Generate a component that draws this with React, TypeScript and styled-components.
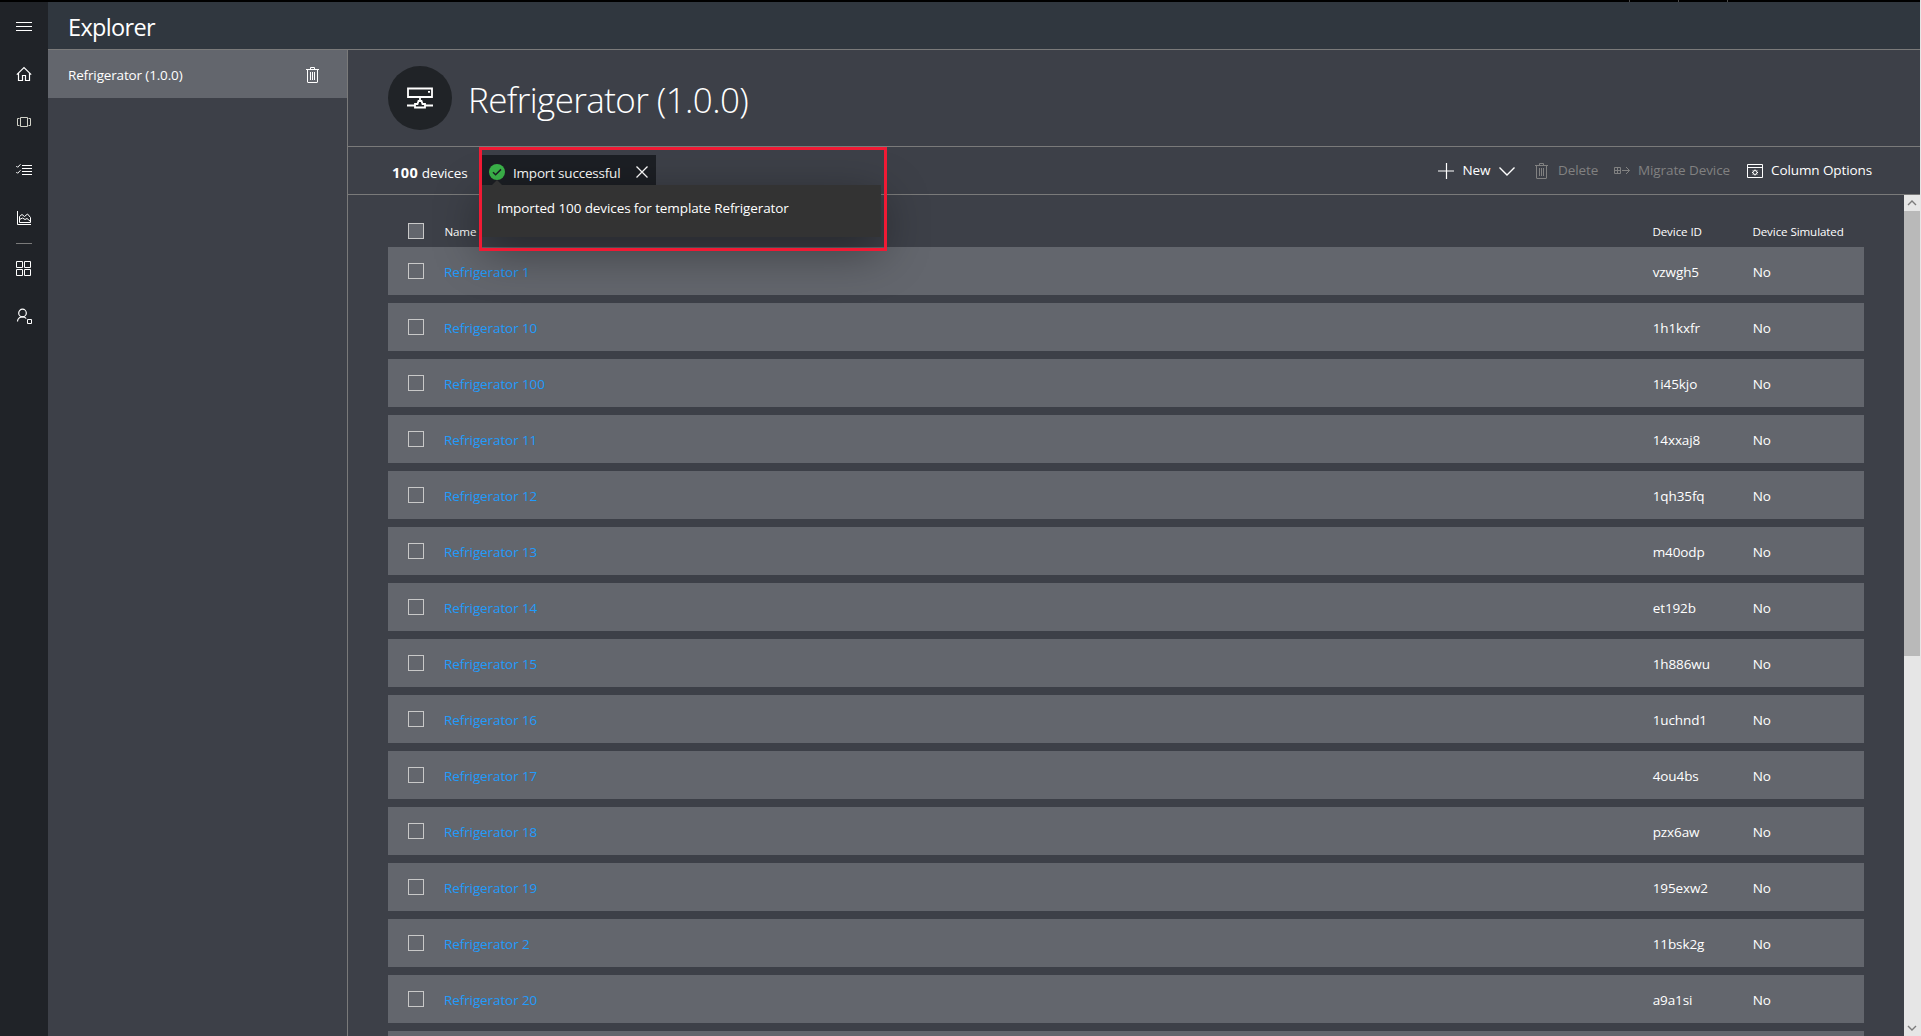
import React from "react";
import styled, { createGlobalStyle, css } from "styled-components";

const Global = createGlobalStyle`
  * { box-sizing: border-box; }
  html, body, #root { height: 100%; }
  body {
    margin: 0;
    overflow: hidden;
    background: #3d4048;
    color: #fff;
    font-family: "Open Sans", "Noto Sans", sans-serif;
    font-size: 13.5px;
    letter-spacing: -0.1px;
  }
`;

const Screen = styled.div`
  height: 100vh;
  display: flex;
  flex-direction: column;
  border-right: 1px solid #e6e6e6;
`;

const TopEdge = styled.div`
  height: 2px;
  flex: none;
  background: #000;
  display: flex;
  gap: 48px;
  padding-left: 1629px;
`;

const Tick = styled.i`
  width: 1px;
  background: #4c4c4c;
`;

const Shell = styled.div`
  flex: 1;
  min-height: 0;
  display: flex;
`;

const Rail = styled.nav`
  width: 48px;
  flex: none;
  background: #202328;
  display: flex;
  flex-direction: column;
  align-items: center;
`;

const RailItem = styled.a`
  width: 48px;
  height: 48px;
  display: flex;
  align-items: center;
  justify-content: center;
`;

const RailDivider = styled.div`
  width: 16px;
  height: 1px;
  margin: 1px 0 0;
  background: #7a7a7a;
`;

const Workspace = styled.div`
  flex: 1;
  min-width: 0;
  display: flex;
  flex-direction: column;
`;

const AppHeader = styled.header`
  height: 48px;
  flex: none;
  padding: 0 0 0 20px;
  background: #30373f;
  border-bottom: 1px solid #7a7a7a;
  font-size: 23.5px;
  line-height: 51px;
  letter-spacing: -0.65px;
`;

const Panes = styled.div`
  flex: 1;
  min-height: 0;
  display: flex;
`;

const TemplatePane = styled.aside`
  width: 300px;
  flex: none;
  border-right: 1px solid #7a7a7a;
`;

const TemplateItem = styled.div`
  height: 48px;
  padding: 2px 28px 0 20px;
  background: #63666d;
  display: flex;
  align-items: center;
  justify-content: space-between;
  letter-spacing: -0.15px;
`;

const Detail = styled.main`
  flex: 1;
  min-width: 0;
  display: flex;
  flex-direction: column;
`;

const DetailHeader = styled.div`
  height: 97px;
  flex: none;
  padding: 0 40px;
  display: flex;
  align-items: center;
  gap: 16px;
  border-bottom: 1px solid #7a7a7a;
`;

const Avatar = styled.div`
  width: 64px;
  height: 64px;
  border-radius: 50%;
  background: #202327;
  display: flex;
  align-items: center;
  justify-content: center;
`;

const Title = styled.h1`
  margin: 0;
  padding-top: 2px;
  font-size: 35px;
  font-weight: 300;
  letter-spacing: -0.6px;
  white-space: nowrap;
`;

const Toolbar = styled.div`
  height: 48px;
  flex: none;
  padding: 0 40px 0 44px;
  display: flex;
  align-items: flex-start;
  border-bottom: 1px solid #7a7a7a;
`;

const Count = styled.div`
  width: 90px;
  padding-top: 16px;
  line-height: 20px;
  white-space: nowrap;

  b {
    font-size: 14.5px;
    letter-spacing: 0.5px;
  }
`;

const Notice = styled.div`
  position: relative;
  width: 174px;
  height: 30px;
  margin-top: 8px;
  padding: 4px 8px 0 7px;
  display: flex;
  align-items: center;
  background: #1c1f24;
`;

const NoticeLabel = styled.span`
  flex: 1;
  margin-left: 8px;
  padding-top: 1px;
  letter-spacing: -0.2px;
  white-space: nowrap;
`;

const Callout = styled.div`
  position: absolute;
  z-index: 2;
  left: 0;
  top: 30px;
  width: 399px;
  height: 52px;
  padding: 14px 15px;
  background: #333;
  box-shadow: 0 14px 48px rgba(0, 0, 0, 0.42);
  white-space: nowrap;

  &::before {
    content: "";
    position: absolute;
    left: 10px;
    top: -5px;
    border: 5px solid transparent;
    border-top: 0;
    border-bottom-color: #333;
  }
`;

const Highlight = styled.div`
  position: absolute;
  z-index: 3;
  left: -3px;
  top: -8px;
  width: 408px;
  height: 104px;
  border: 3px solid #f01a34;
`;

const Commands = styled.div`
  margin-left: auto;
  padding-top: 14px;
  display: flex;
`;

const Command = styled.button<{ $width: number; $gap?: number; $muted?: boolean }>`
  width: ${(p) => p.$width}px;
  padding: 0;
  border: 0;
  background: none;
  font: inherit;
  line-height: 18px;
  letter-spacing: inherit;
  color: ${(p) => (p.$muted ? "#818181" : "#fff")};
  display: flex;
  align-items: flex-start;
  gap: ${(p) => p.$gap ?? 8}px;
  white-space: nowrap;

  svg {
    margin-top: 2px;
  }
`;

const TableArea = styled.div`
  flex: 1;
  min-height: 0;
  display: flex;
`;

const Table = styled.div`
  flex: 1;
  min-width: 0;
  padding: 0 40px;
  overflow: hidden;
`;

const columns = css`
  display: grid;
  grid-template-columns: 56px 1fr 100px 112px;
  align-items: center;
`;

const HeadRow = styled.div`
  ${columns}
  height: 52px;
  padding-top: 20px;
  font-size: 11.6px;
`;

const Row = styled.div`
  ${columns}
  height: 48px;
  margin-bottom: 8px;
  background: #63666d;
`;

const Check = styled.span<{ $filled?: boolean }>`
  width: 16px;
  height: 16px;
  margin-left: 20px;
  border: 1px solid #c8c8c8;
  background: ${(p) => (p.$filled ? "#63666d" : "transparent")};
`;

const HeadCell = styled.span`
  padding: 1px 0 0 0.4px;
`;

const Cell = styled.span`
  padding: 2px 0 0 0.7px;
`;

const NameLink = styled.a`
  padding-top: 2px;
  color: #219bfb;
`;

const Scrollbar = styled.div`
  width: 16px;
  flex: none;
  background: #e6e6e6;
  display: flex;
  flex-direction: column;
`;

const ScrollButton = styled.div`
  height: 16px;
  display: flex;
  align-items: center;
  justify-content: center;
`;

const Thumb = styled.div`
  height: 445px;
  margin-bottom: auto;
  background: #b9b9b9;
`;

const Glyph = styled.svg`
  flex: none;
  fill: none;
  stroke: currentColor;
`;

const Svg = ({ w = 16, h = 16, sw = 1, children }: { w?: number; h?: number; sw?: number; children: React.ReactNode }) => (
  <Glyph width={w} height={h} viewBox={`0 0 ${w} ${h}`} strokeWidth={sw}>
    {children}
  </Glyph>
);

const MenuIcon = () => <Svg><path d="M0 4.5h16M0 8.5h16M0 12.5h16" /></Svg>;
const HomeIcon = () => <Svg><path d="M.8 8.6 8 1.6l7.2 7M2.5 7.2v7.3h4v-5h3v5h4V7.2" strokeWidth="1.2" /></Svg>;
const DevicesIcon = () => <Svg><g stroke="#d2d2c8"><path d="M4.5 3.5h7v9h-7z" /><path d="M3.5 4.500h-2v7h2M12.500 4.500h2v7h-2" /></g></Svg>;
const JobsIcon = () => <Svg><path d="M6 3.5h10.500M6 6.500h10.500M6 9.500h10.500M6 12.500h10.500M.3 4l1.300 1.300L4.500 2.300M.3 10l1.300 1.300L4.500 8.300" /></Svg>;
const AnalyticsIcon = () => <Svg><path d="M1.500 1v13.500H15" /><path d="M3.500 12.500V6.500l2.500-2 2.500 2 3-2.500 3 3.500v5zM3.500 9.500l3-1.500 2.500 1.500 2-1 3.500 3" /></Svg>;
const AppsIcon = () => <Svg><path d="M.5 1.500h6v6h-6zM8.500 1.500h6v6h-6zM.5 9.500h6v6h-6zM8.500 9.500h6v6h-6z" /></Svg>;
const PersonIcon = () => <Svg><g strokeWidth="1.2"><circle cx="6.500" cy="5" r="3.800" /><path d="M1.500 13.500c0-2.800 2.200-4.700 5-4.700 1.600 0 2.900.6 3.700 1.700" /></g><path d="M11.500 11.500h4v4h-4z" /></Svg>;
const TrashIcon = () => <Svg w={13}><path d="M0 2.500h13M1.500 2.500v12.500a.5.500 0 0 0 .5.500h9a.5.500 0 0 0 .5-.5V2.500M4.500 2.500V.500h4v2M4.500 5v8M6.500 5v8M8.500 5v8" /></Svg>;
const ServerIcon = () => <Svg w={26} h={24} sw={1.8}><path d="M1 2.500h24v8.500H1zM13 11v3.500M0 19.500h8M18 19.500h8M8 18h2.500l1-3h3l1 3H18v3.500H8z" /><path d="M21 5.800h2" /></Svg>;
const PlusIcon = () => <Svg><path d="M8.500 0v16M0 8h16" strokeWidth="1.2" /></Svg>;
const ChevronIcon = () => <Svg sw={1.4}><path d="m.5 4.500 7.500 7.500 7.500-7.500" /></Svg>;
const MigrateIcon = () => <Svg><path d="M.5 4.500h6v6h-6zM3.500 4.500v6M.5 7.500h6M8 7.500h7.500M12 4l3.500 3.500L12 11" /></Svg>;
const OptionsIcon = () => <Svg><path d="M.5 1.500h15v13H.5zM.5 4.500h15" /><circle cx="8" cy="9.500" r="2" /><path d="M8 6.500v1M8 11.500v1M5 9.500h1M10 9.500h1M5.900 7.400l.7.700M9.400 10.900l.7.700M10.100 7.400l-.7.700M6.600 10.900l-.7.700" /></Svg>;
const SuccessIcon = () => <Svg><circle cx="8" cy="8" r="8" fill="#3bb44a" stroke="none" /><path d="m4 8.300 2.600 2.500L12 5.400" stroke="#1c1f24" strokeWidth="1.5" /></Svg>;
const CloseIcon = () => <Svg w={12} h={12} sw={1.3}><path d="m.5.500 11 11M11.500.500l-11 11" /></Svg>;
const Arrow = ({ d }: { d: string }) => <Svg sw={1.4}><path stroke="#7c7c7c" d={d} /></Svg>;

const devices = [
  ["1", "vzwgh5"], ["10", "1h1kxfr"], ["100", "1i45kjo"], ["11", "14xxaj8"], ["12", "1qh35fq"],
  ["13", "m40odp"], ["14", "et192b"], ["15", "1h886wu"], ["16", "1uchnd1"], ["17", "4ou4bs"],
  ["18", "pzx6aw"], ["19", "195exw2"], ["2", "11bsk2g"], ["20", "a9a1si"],
];

export default function App() {
  return (
    <>
      <Global />
      <Screen>
        <TopEdge><Tick /><Tick /><Tick /></TopEdge>
        <Shell>
          <Rail>
            <RailItem><MenuIcon /></RailItem>
            <RailItem><HomeIcon /></RailItem>
            <RailItem><DevicesIcon /></RailItem>
            <RailItem><JobsIcon /></RailItem>
            <RailItem><AnalyticsIcon /></RailItem>
            <RailDivider />
            <RailItem><AppsIcon /></RailItem>
            <RailItem><PersonIcon /></RailItem>
          </Rail>
          <Workspace>
            <AppHeader>Explorer</AppHeader>
            <Panes>
              <TemplatePane>
                <TemplateItem>Refrigerator (1.0.0)<TrashIcon /></TemplateItem>
              </TemplatePane>
              <Detail>
                <DetailHeader>
                  <Avatar><ServerIcon /></Avatar>
                  <Title>Refrigerator (1.0.0)</Title>
                </DetailHeader>
                <Toolbar>
                  <Count><b>100</b> devices</Count>
                  <Notice>
                    <SuccessIcon />
                    <NoticeLabel>Import successful</NoticeLabel>
                    <CloseIcon />
                    <Callout>Imported 100 devices for template Refrigerator</Callout>
                    <Highlight />
                  </Notice>
                  <Commands>
                    <Command $width={97} $gap={8.5}><PlusIcon />New<ChevronIcon /></Command>
                    <Command $width={79} $gap={10} $muted><TrashIcon />Delete</Command>
                    <Command $width={133} $muted><MigrateIcon />Migrate Device</Command>
                    <Command $width={133}><OptionsIcon />Column Options</Command>
                  </Commands>
                </Toolbar>
                <TableArea>
                  <Table>
                    <HeadRow>
                      <Check $filled />
                      <HeadCell>Name</HeadCell>
                      <HeadCell>Device ID</HeadCell>
                      <HeadCell>Device Simulated</HeadCell>
                    </HeadRow>
                    {devices.map(([n, id]) => (
                      <Row key={n}>
                        <Check />
                        <NameLink>{`Refrigerator ${n}`}</NameLink>
                        <Cell>{id}</Cell>
                        <Cell>No</Cell>
                      </Row>
                    ))}
                    <Row />
                  </Table>
                  <Scrollbar>
                    <ScrollButton><Arrow d="m4 10 4-4 4 4" /></ScrollButton>
                    <Thumb />
                    <ScrollButton><Arrow d="m4 6 4 4 4-4" /></ScrollButton>
                  </Scrollbar>
                </TableArea>
              </Detail>
            </Panes>
          </Workspace>
        </Shell>
      </Screen>
    </>
  );
}
